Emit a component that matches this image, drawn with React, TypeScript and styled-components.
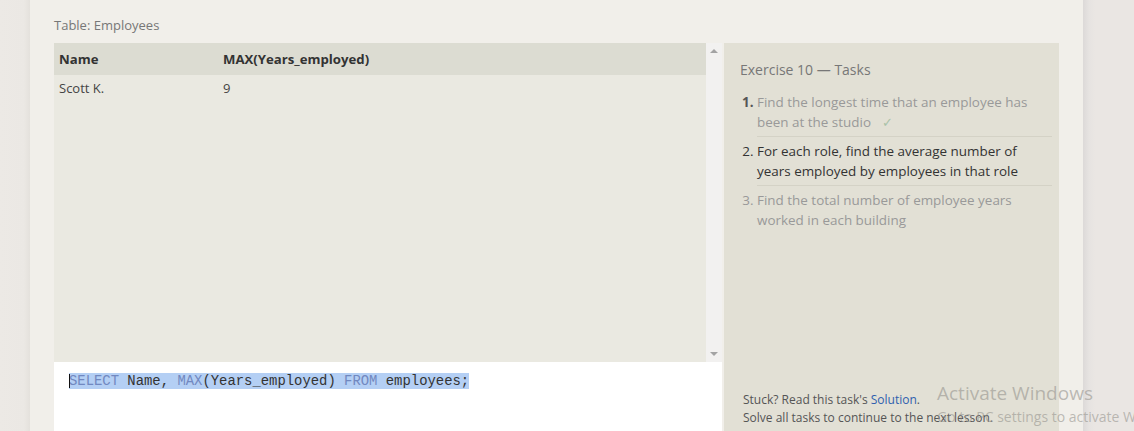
import React from 'react';
import styled, { createGlobalStyle } from 'styled-components';

const GlobalStyle = createGlobalStyle`
  html, body {
    margin: 0;
    padding: 0;
    background: #ebe8e4;
    font-family: 'Open Sans', 'Noto Sans', sans-serif;
    overflow: hidden;
  }
`;

const Page = styled.div`
  position: relative;
  display: flex;
  height: 100vh;
  overflow: hidden;
`;

const Gutter = styled.div<{ $side: 'left' | 'right' }>`
  flex: ${(p) => (p.$side === 'left' ? '0 0 30px' : '1 1 auto')};
  background: ${(p) =>
    p.$side === 'left'
      ? 'linear-gradient(to right, #ece9e5 0, #ebe8e4 24px, #e4e1dc 30px)'
      : 'linear-gradient(to right, #dcd9d8 0, #e6e3e1 6px, #eae6e3 12px)'};
`;

const Panel = styled.div`
  flex: 0 0 1053px;
  display: flex;
  flex-direction: column;
  box-sizing: border-box;
  padding: 15px 24px 0 24px;
  background: #f1efea;
`;

const Caption = styled.div`
  font-size: 13px;
  line-height: 20px;
  color: #777;
  margin-bottom: 8px;
`;

const Workspace = styled.div`
  flex: 1;
  display: grid;
  grid-template-columns: 668px 335px;
  column-gap: 2px;
  min-height: 0;
`;

const LeftColumn = styled.div`
  display: flex;
  flex-direction: column;
`;

const Results = styled.div`
  display: flex;
  height: 319px;
  background: #eae9e1;
`;

const TableWrap = styled.div`
  flex: 1;
`;

const Table = styled.table`
  width: 100%;
  border-collapse: collapse;
  font-size: 13px;
  color: #333;
`;

const HeadCell = styled.th<{ $width?: number }>`
  text-align: left;
  font-weight: 700;
  font-size: 13.2px;
  height: 32px;
  padding: 0 5px;
  background: #dcdcd2;
  color: #333;
  width: ${(p) => (p.$width ? `${p.$width}px` : 'auto')};
  box-sizing: border-box;
`;

const Cell = styled.td`
  height: 26px;
  padding: 0 5px;
  color: #444;
`;

const Scrollbar = styled.div`
  flex: 0 0 16px;
  display: flex;
  flex-direction: column;
  justify-content: space-between;
  align-items: center;
  padding: 6px 0;
  box-sizing: border-box;
  background: #f2f1f0;
`;

const Arrow = styled.div<{ $dir: 'up' | 'down' }>`
  width: 0;
  height: 0;
  border-left: 4px solid transparent;
  border-right: 4px solid transparent;
  ${(p) =>
    p.$dir === 'up'
      ? 'border-bottom: 4px solid #a3a3a3;'
      : 'border-top: 4px solid #a3a3a3;'}
`;

const Editor = styled.div`
  flex: 1;
  background: #fff;
  padding: 11px 15px;
`;

const CodeLine = styled.div`
  font-family: 'Liberation Mono', 'DejaVu Sans Mono', monospace;
  font-size: 13.9px;
  line-height: 16px;
  color: #333;
  white-space: pre;
`;

const Selection = styled.span`
  position: relative;
  background: #b4cff4;
  &::before {
    content: '';
    position: absolute;
    left: 0;
    top: 1px;
    bottom: 1px;
    width: 1px;
    background: #111;
  }
`;

const Keyword = styled.span`
  color: #7188c0;
`;

const Tasks = styled.div`
  display: flex;
  flex-direction: column;
  background: #e2e0d5;
  padding: 17px 7px 4px 16px;
  box-sizing: border-box;
`;

const TasksTitle = styled.div`
  font-size: 14px;
  line-height: 20px;
  color: #777;
  margin-bottom: 8px;
`;

const TaskList = styled.ol`
  margin: 0;
  padding: 0 0 0 17px;
  list-style: decimal outside;
`;

const Task = styled.li<{ $state: 'done' | 'active' | 'todo' }>`
  font-size: 13.45px;
  line-height: 20px;
  padding: 4px 0;
  color: ${(p) => (p.$state === 'active' ? '#333' : '#999')};
  border-bottom: 1px solid
    ${(p) => (p.$state === 'todo' ? 'transparent' : '#d4d2c6')};
  &::marker {
    color: ${(p) => (p.$state === 'done' ? '#555' : 'inherit')};
    font-weight: ${(p) => (p.$state === 'done' ? 700 : 400)};
  }
`;

const Check = styled.span`
  color: #a9c2a9;
  margin-left: 11px;
`;

const Footer = styled.div`
  margin-top: auto;
  padding-left: 3px;
  font-size: 12px;
  line-height: 18px;
  color: #555;
`;

const Link = styled.a`
  color: #2f5fae;
  text-decoration: none;
`;

const Watermark = styled.div`
  position: absolute;
  left: 937px;
  top: 380px;
  white-space: nowrap;
  color: rgba(150, 148, 142, 0.6);
  pointer-events: none;
`;

const WatermarkTitle = styled.div`
  font-size: 19px;
  line-height: 26px;
`;

const WatermarkSub = styled.div`
  font-size: 14px;
  line-height: 22px;
`;

export default function App() {
  return (
    <>
      <GlobalStyle />
      <Page>
        <Gutter $side="left" />
        <Panel>
          <Caption>Table: Employees</Caption>
          <Workspace>
            <LeftColumn>
              <Results>
                <TableWrap>
                  <Table>
                    <thead>
                      <tr>
                        <HeadCell $width={164}>Name</HeadCell>
                        <HeadCell>MAX(Years_employed)</HeadCell>
                      </tr>
                    </thead>
                    <tbody>
                      <tr>
                        <Cell>Scott K.</Cell>
                        <Cell>9</Cell>
                      </tr>
                    </tbody>
                  </Table>
                </TableWrap>
                <Scrollbar>
                  <Arrow $dir="up" />
                  <Arrow $dir="down" />
                </Scrollbar>
              </Results>
              <Editor>
                <CodeLine>
                  <Selection>
                    <Keyword>SELECT</Keyword> Name, <Keyword>MAX</Keyword>
                    (Years_employed) <Keyword>FROM</Keyword> employees;
                  </Selection>
                </CodeLine>
              </Editor>
            </LeftColumn>
            <Tasks>
              <TasksTitle>Exercise 10 — Tasks</TasksTitle>
              <TaskList>
                <Task $state="done">
                  Find the longest time that an employee has been at the studio
                  <Check>✓</Check>
                </Task>
                <Task $state="active">
                  For each role, find the average number of years employed by
                  employees in that role
                </Task>
                <Task $state="todo">
                  Find the total number of employee years worked in each building
                </Task>
              </TaskList>
              <Footer>
                Stuck? Read this task's <Link href="#">Solution</Link>.
                <br />
                Solve all tasks to continue to the next lesson.
              </Footer>
            </Tasks>
          </Workspace>
        </Panel>
        <Gutter $side="right" />
        <Watermark>
          <WatermarkTitle>Activate Windows</WatermarkTitle>
          <WatermarkSub>Go to PC settings to activate Windows.</WatermarkSub>
        </Watermark>
      </Page>
    </>
  );
}
